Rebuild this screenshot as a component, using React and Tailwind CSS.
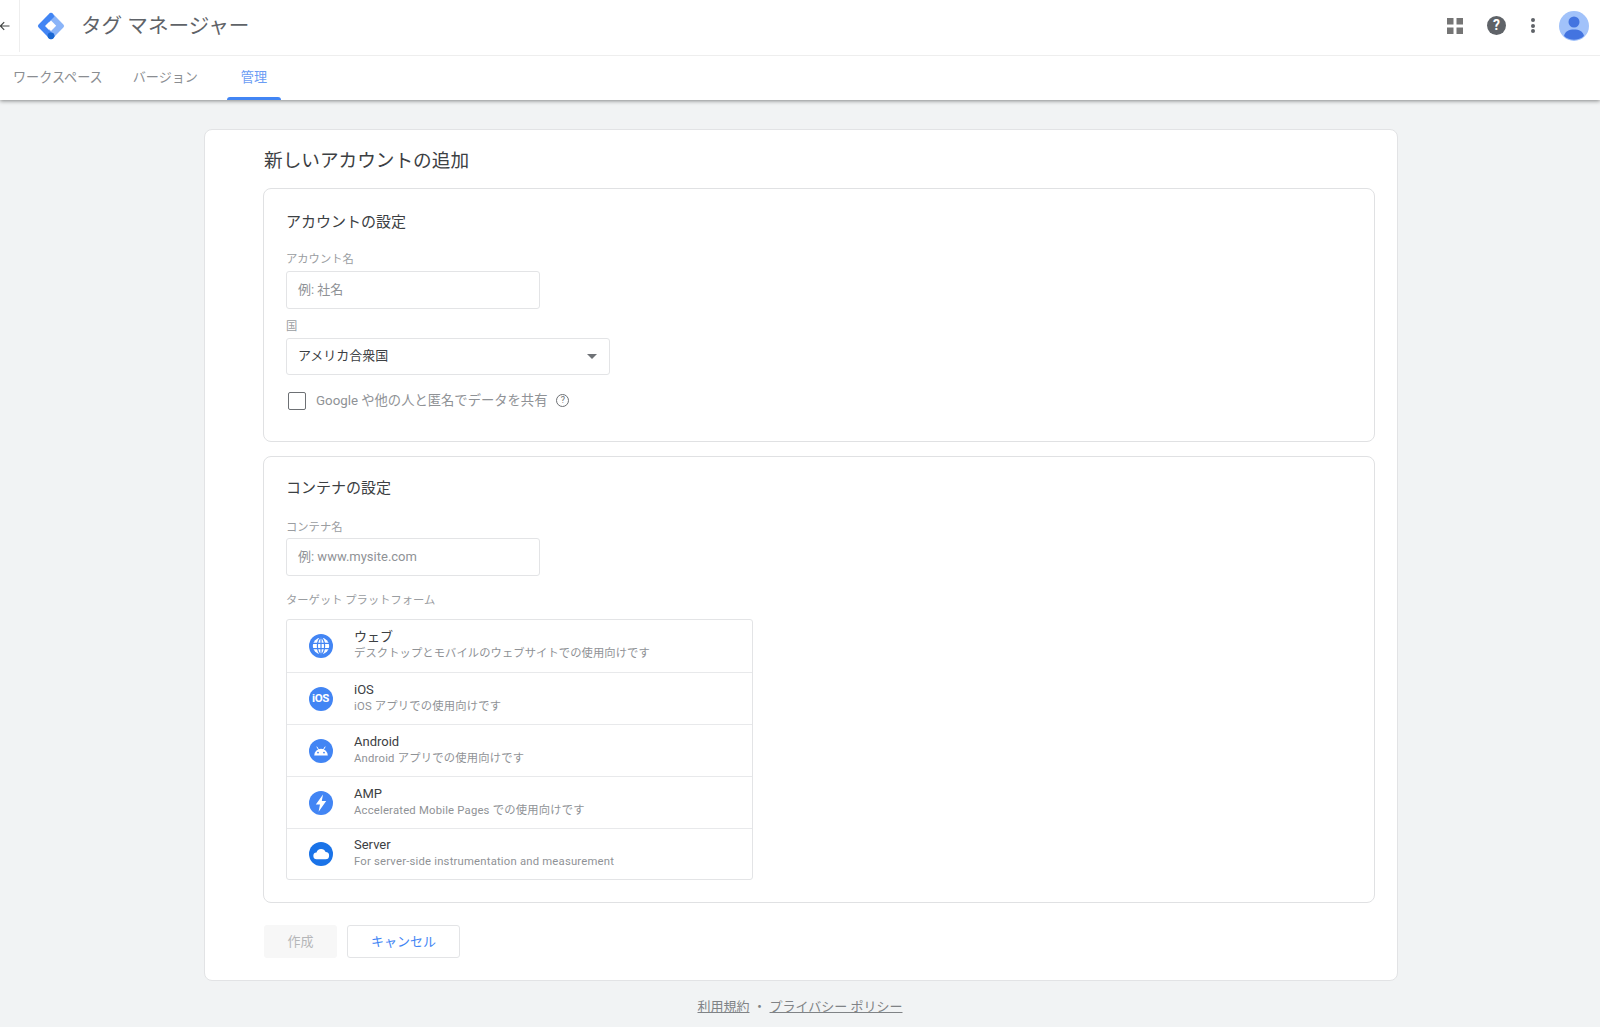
const platforms = [
  { key: "web", name: "ウェブ", desc: "デスクトップとモバイルのウェブサイトでの使用向けです", h: "h-[53px]", track: "tracking-[0.08px]" },
  { key: "ios", name: "iOS", desc: "iOS アプリでの使用向けです", h: "h-[52px]", track: "tracking-[0.2px]" },
  { key: "android", name: "Android", desc: "Android アプリでの使用向けです", h: "h-[52px]", track: "tracking-[0.2px]" },
  { key: "amp", name: "AMP", desc: "Accelerated Mobile Pages での使用向けです", h: "h-[52px]", track: "tracking-[0.2px]" },
  { key: "server", name: "Server", desc: "For server-side instrumentation and measurement", h: "h-[50px]", track: "tracking-[0.2px]" },
];

function TagLogo() {
  return (
    <svg width="28" height="28" viewBox="0 0 28 28">
      <path d="M12.4 1.6a2.3 2.3 0 0 1 3.2 0l10.8 10.8a2.3 2.3 0 0 1 0 3.2L15.6 26.4l-6.2-6.2L15.6 14 9.6 8z" fill="#8ab4f8" />
      <path d="M12.4 1.6 1.6 12.4a2.3 2.3 0 0 0 0 3.2l10.8 10.8a2.3 2.3 0 0 0 3.2 0l2.4-2.4L8 14 17.5 4.5 15.6 1.6a2.3 2.3 0 0 0-3.2 0z" fill="#4285f4" />
      <path d="M14 8.6 19.2 13.8 14 19 8.8 13.8z" fill="#fff" />
      <circle cx="14" cy="23.8" r="3.4" fill="#1967d2" />
    </svg>
  );
}

function PlatformIcon({ type }) {
  if (type === "ios") {
    return (
      <div className="w-[24px] h-[24px] rounded-full bg-[#4285f4] flex items-center justify-center text-white text-[11.5px] font-bold tracking-[-0.4px]">
        iOS
      </div>
    );
  }
  return (
    <svg width="24" height="24" viewBox="0 0 24 24">
      <circle cx="12" cy="12" r="12" fill={type === "server" ? "#1a73e8" : "#4285f4"} />
      {type === "web" && (
        <g>
          <circle cx="12" cy="12" r="8.2" fill="#fff" />
          <g fill="none" stroke="#4285f4" strokeWidth="1.2">
            <ellipse cx="12" cy="12" rx="3.6" ry="8.2" />
            <path d="M12 3.8v16.4M3.8 9.4h16.4M3.8 14.6h16.4" />
          </g>
        </g>
      )}
      {type === "android" && (
        <g fill="#fff">
          <path d="M5.2 16.6a6.8 6.8 0 0 1 13.6 0z" />
          <path d="M8 8l1.4 2.4M16 8l-1.4 2.4" stroke="#fff" strokeWidth="1" strokeLinecap="round" />
          <circle cx="9" cy="13.6" r="0.9" fill="#4285f4" />
          <circle cx="15" cy="13.6" r="0.9" fill="#4285f4" />
        </g>
      )}
      {type === "amp" && <path d="M14 3.4 6.8 13.6h4.2L9.6 20.8 17.2 10h-4.4z" fill="#fff" />}
      {type === "server" && (
        <path d="M8 17.2a3.4 3.4 0 0 1-.5-6.8 4.8 4.8 0 0 1 9.1-.4 3.6 3.6 0 0 1-.2 7.2z" fill="#fff" />
      )}
    </svg>
  );
}

function TextField({ placeholder }) {
  return (
    <div className="w-[254px] h-[38px] border border-[#e3e4e6] rounded-[3px] px-[11px] flex items-center text-[13px] text-[#8f9296]">
      {placeholder}
    </div>
  );
}

function App() {
  return (
    <div className="h-[1027px] overflow-hidden bg-[#f1f3f4] font-['Roboto','Noto_Sans_CJK_JP',sans-serif]">
      {/* HEADER */}
      <header className="bg-white h-[100px] shadow-[0_1px_4px_rgba(0,0,0,0.45)] relative">
        <div className="h-[56px] pb-[4px] flex items-center border-b border-[#eeeeee]">
          <div className="w-[20px] h-[52px] border-r border-[#eeeeee] flex items-center">
            <svg width="12" height="12" viewBox="0 0 12 12" className="-ml-[1px]" fill="none" stroke="#444746" strokeWidth="1.2">
              <path d="M10.5 6H1.5M5.2 2.2 1.4 6l3.8 3.8" />
            </svg>
          </div>
          <div className="ml-[17px]">
            <TagLogo />
          </div>
          <span className="ml-[16px] mt-[1px] text-[20.6px] text-[#5f6368]">タグ マネージャー</span>

          <div className="ml-auto flex items-center pr-[11px]">
            <svg width="16" height="16" viewBox="0 0 16 16" fill="#757575" className="mr-[24px]">
              <rect width="6.5" height="6.5" />
              <rect x="9.5" width="6.5" height="6.5" />
              <rect y="9.5" width="6.5" height="6.5" />
              <rect x="9.5" y="9.5" width="6.5" height="6.5" />
            </svg>
            <div className="w-[19px] h-[19px] rounded-full bg-[#5f6368] text-white text-[14px] font-bold flex items-center justify-center mr-[25px]">
              ?
            </div>
            <div className="flex flex-col gap-[1.7px] mr-[24px]">
              <span className="w-[4px] h-[4px] rounded-full bg-[#5f6368]" />
              <span className="w-[4px] h-[4px] rounded-full bg-[#5f6368]" />
              <span className="w-[4px] h-[4px] rounded-full bg-[#5f6368]" />
            </div>
            <svg width="30" height="30" viewBox="0 0 30 30">
              <circle cx="15" cy="15" r="15" fill="#a1c2fa" />
              <circle cx="15" cy="11" r="5.5" fill="#4374e0" />
              <path d="M5 25c1-5 5-6.5 10-6.5S24 20 25 25a15 15 0 0 1-20 0z" fill="#4374e0" />
            </svg>
          </div>
        </div>

        <nav className="h-[44px] flex items-center text-[13.1px] text-[#8a8d91]">
          <span className="ml-[13px]">ワークスペース</span>
          <span className="ml-[30px]">バージョン</span>
          <div className="ml-[29px] w-[54px] h-full relative flex items-center justify-center text-[#6a9cf4]">
            管理
            <div className="absolute left-0 right-0 bottom-0 h-[3px] rounded-t-[3px] bg-[#4285f4]" />
          </div>
        </nav>
      </header>

      {/* CARD */}
      <main className="ml-[204px] mt-[29px] w-[1194px] h-[852px] bg-white border border-[#e2e3e5] rounded-[8px] pl-[58px] pr-[22px]">
        <h1 className="h-[58px] pt-[18px] pl-[1px] text-[18.65px] leading-[27px] text-[#3c4043]">新しいアカウントの追加</h1>

        {/* ACCOUNT */}
        <section className="h-[254px] border border-[#e0e1e3] rounded-[8px] pl-[22px] pr-[23px] pt-[23px]">
          <h2 className="text-[15px] leading-[21px] text-[#3c4043]">アカウントの設定</h2>
          <div className="mt-[19px] text-[11.3px] leading-[16px] text-[#9a9da1]">アカウント名</div>
          <div className="mt-[3px]">
            <TextField placeholder="例: 社名" />
          </div>
          <div className="mt-[10px] text-[11.3px] leading-[16px] text-[#9a9da1]">国</div>
          <div className="mt-[3px] w-[324px] h-[37px] border border-[#e3e4e6] rounded-[3px] pl-[11px] pr-[12px] pb-[1px] flex items-center justify-between text-[13px] text-[#3c4043]">
            アメリカ合衆国
            <svg width="10" height="5" viewBox="0 0 10 5" fill="#6f7276">
              <path d="M0 0h10L5 5z" />
            </svg>
          </div>
          <div className="mt-[16px] ml-[2px] flex items-center text-[13.3px] text-[#8f9296]">
            <div className="w-[18px] h-[18px] border-[1.5px] border-[#6d7074] rounded-[2px]" />
            <span className="ml-[10px]">Google や他の人と匿名でデータを共有</span>
            <div className="ml-[9px] w-[13px] h-[13px] rounded-full border border-[#6d7074] text-[9px] text-[#6d7074] flex items-center justify-center">
              ?
            </div>
          </div>
        </section>

        {/* CONTAINER */}
        <section className="mt-[14px] h-[447px] border border-[#e0e1e3] rounded-[8px] pl-[22px] pr-[23px] pt-[21px]">
          <h2 className="text-[15px] leading-[21px] text-[#3c4043]">コンテナの設定</h2>
          <div className="mt-[21px] text-[11.3px] leading-[16px] text-[#9a9da1]">コンテナ名</div>
          <div className="mt-[2px]">
            <TextField placeholder="例: www.mysite.com" />
          </div>
          <div className="mt-[17px] text-[11.3px] leading-[16px] text-[#9a9da1]">ターゲット プラットフォーム</div>
          <div className="mt-[10px] w-[467px] border border-[#e3e4e6] rounded-[3px] divide-y divide-[#e8e9eb]">
            {platforms.map((p) => (
              <div key={p.key} className={`${p.h} flex items-center`}>
                <div className="w-[67px] flex justify-center shrink-0">
                  <PlatformIcon type={p.key} />
                </div>
                <div className="pb-[3px]">
                  <div className="text-[13px] leading-[18px] text-[#3c4043]">{p.name}</div>
                  <div className={`text-[11.3px] leading-[15px] ${p.track} text-[#8f9296]`}>{p.desc}</div>
                </div>
              </div>
            ))}
          </div>
        </section>

        {/* ACTIONS */}
        <div className="mt-[22px] ml-[1px] flex gap-[10px]">
          <button className="w-[73px] h-[33px] rounded-[3px] bg-[#f7f7f7] text-[13px] text-[#b5b6b8]">作成</button>
          <button className="w-[113px] h-[33px] rounded-[3px] bg-white border border-[#e3e4e6] text-[13px] text-[#4285f4]">キャンセル</button>
        </div>
      </main>

      {/* FOOTER */}
      <footer className="mt-[17px] flex justify-center items-center text-[13px] leading-[18px] text-[#808386]">
        <a className="underline">利用規約</a>
        <span className="mx-[3.5px]">・</span>
        <a className="underline">プライバシー ポリシー</a>
      </footer>
    </div>
  );
}

export default App;
